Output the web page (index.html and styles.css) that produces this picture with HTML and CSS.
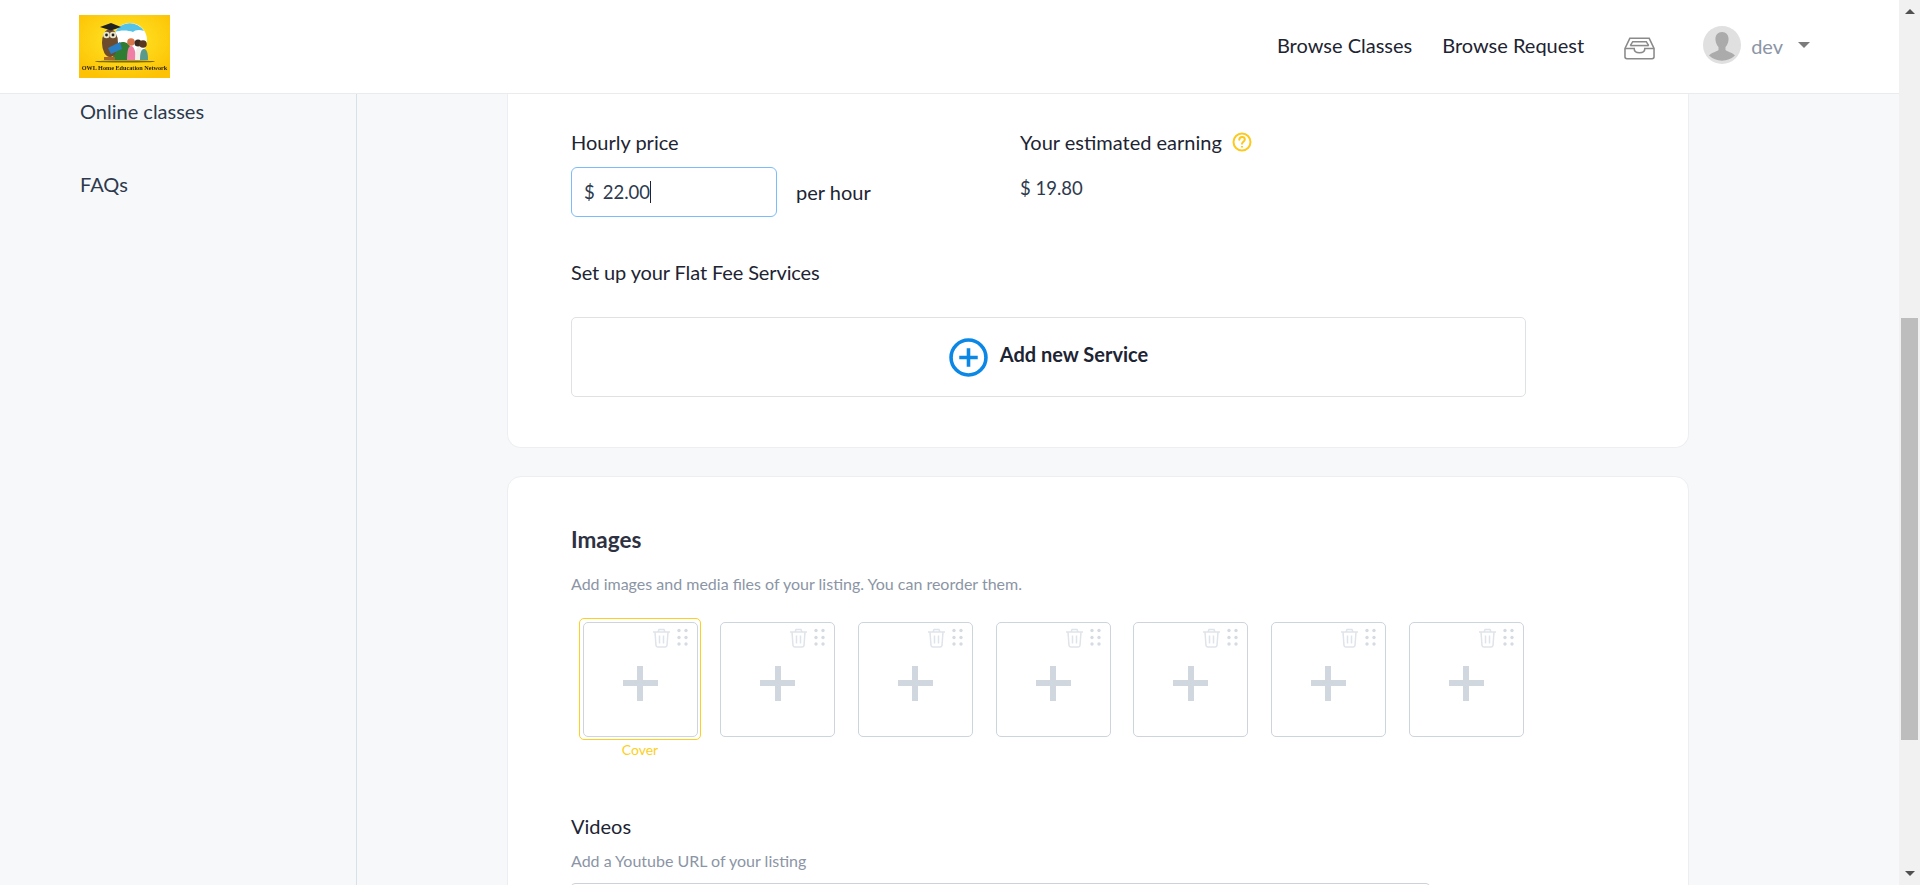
FILE: index.html
```html
<!DOCTYPE html>
<html lang="en">
<head>
  <meta charset="UTF-8" />
  <title>OWL Home Education Network</title>
  <link rel="stylesheet" href="styles.css">
</head>
<body>
  <div class="page">
    <header class="topbar">
      <svg class="logo" viewBox="0 0 91 63" width="91" height="63">
        <defs>
          <radialGradient id="logoBg" cx="50%" cy="40%" r="65%">
            <stop offset="0" stop-color="#ffe92a"/>
            <stop offset="1" stop-color="#fdc204"/>
          </radialGradient>
        </defs>
        <rect width="91" height="63" fill="url(#logoBg)"/>
        <circle cx="51" cy="25" r="17" fill="#fff"/>
        <path d="M36 17a17 17 0 0 1 29-1c-5-2-9-1-11 1-5-2-13-2-18 0z" fill="#56c2e6"/>
        <path d="M34 45c0-14 6-19 11-18 7 1 9 9 9 18z" fill="#2f7d32"/>
        <ellipse cx="31" cy="28" rx="8" ry="14" fill="#6d4c2e"/>
        <path d="M21 12l11-4 10 4-10 3.500z" fill="#222"/>
        <circle cx="27.500" cy="20" r="3.300" fill="#e8e4c8"/>
        <circle cx="34" cy="20" r="3.300" fill="#e8e4c8"/>
        <circle cx="27.500" cy="20" r="1.400" fill="#222"/>
        <circle cx="34" cy="20" r="1.400" fill="#222"/>
        <path d="M29 33l12-6 2 7-11 5z" fill="#2a7fc4"/>
        <path d="M25 42h11v3H25z" fill="#a8642a"/>
        <circle cx="52" cy="27" r="3.800" fill="#d9754a"/>
        <path d="M48 45c0-8 1-14 4-14s5 6 5 14z" fill="#ef7fa4"/>
        <circle cx="59" cy="28" r="3.500" fill="#3a2a20"/>
        <path d="M56 45c0-7 1-13 4-13s4 6 4 13z" fill="#f0f0e8"/>
        <circle cx="64" cy="29" r="3.800" fill="#5a3820"/>
        <path d="M61 45c0-7 1-11 4-11s4 4 4 11z" fill="#5b9a8a"/>
        <ellipse cx="46" cy="46.500" rx="30" ry="1" fill="#7a6a10"/>
        <text class="logo-text" x="45.500" y="54.500" text-anchor="middle">OWL Home Education Network</text>
      </svg>
      <nav class="topnav">
        <a class="topnav-link">Browse Classes</a>
        <a class="topnav-link">Browse Request</a>
        <svg class="inbox" viewBox="0 0 32 24" width="31" height="24" fill="none" stroke="#8a8a8a" stroke-width="1.600">
          <path d="M1 12.500 6 2h20l5 10.500V21a2 2 0 0 1-2 2H3a2 2 0 0 1-2-2z"/>
          <path d="M1 12.500h9.500c0 3 2.500 4.500 5.500 4.500s5.500-1.500 5.500-4.500H31"/>
          <path d="M6.500 9.500 9 5.500h14l2.500 4"/>
          <path d="M6.500 9.500h19"/>
        </svg>
        <div class="usermenu">
          <svg class="avatar" viewBox="0 0 38 38" width="38" height="38">
            <circle cx="19" cy="19" r="19" fill="#e0e0e0"/>
            <path d="M19 6c4.500 0 7 3.500 6.500 8-.3 3-1.500 5.500-3 7v3c1 1.500 7 2.500 9.500 5.500a19 19 0 0 1-26 0C8.500 26.500 14.500 25.500 15.500 24v-3c-1.500-1.500-2.700-4-3-7C12 9.500 14.500 6 19 6z" fill="#ababab"/>
          </svg>
          <span class="username">dev</span>
          <span class="caret"></span>
        </div>
      </nav>
    </header>

    <div class="layout">
      <aside class="sidebar">
        <a class="side-link">Online classes</a>
        <a class="side-link">FAQs</a>
      </aside>

      <main class="content">
        <section class="card card-cut">
          <div class="price-row">
            <div class="price-col">
              <label class="field-label">Hourly price</label>
              <div class="price-input-row">
                <div class="price-input"><span class="dollar">$</span><span>22.00</span><span class="cursor"></span></div>
                <span class="per-hour">per hour</span>
              </div>
            </div>
            <div class="earning-col">
              <div class="field-label earning-label">Your estimated earning
                <svg class="help" viewBox="0 0 20 20" width="20" height="20" fill="none" stroke="#fdc91b" stroke-width="2">
                  <circle cx="10" cy="10" r="8.500"/>
                  <path d="M7.300 7.800c0-1.700 1.200-2.800 2.800-2.800s2.700 1 2.700 2.400c0 2.200-2.800 2.300-2.800 4.400" stroke-linecap="round"/>
                  <path d="M10 14v1.600"/>
                </svg>
              </div>
              <div class="earning-value">$ 19.80</div>
            </div>
          </div>
          <div class="flat-fee-title">Set up your Flat Fee Services</div>
          <div class="add-service">
            <svg viewBox="0 0 38 38" width="39" height="39" fill="none" stroke="#0b87e6" stroke-width="3.500">
              <circle cx="19" cy="19" r="17"/>
              <path d="M19 10v18M10 19h18"/>
            </svg>
            <span class="add-service-text">Add new Service</span>
          </div>
        </section>

        <section class="card card-media">
          <h2 class="card-title">Images</h2>
          <p class="hint">Add images and media files of your listing. You can reorder them.</p>
          <div class="tiles">
            <div class="tile-wrap tile-cover">
              <div class="tile-frame"><div class="tile">
                <svg class="tile-tools" viewBox="0 0 38 20" width="38" height="20" fill="none" stroke="#dfe4ea" stroke-width="1.500">
                  <g id="toolset">
                    <path d="M1 4h17M6 4l1-2.500h5l1 2.500M3 4l1 13.500a2 2 0 0 0 2 1.500h7a2 2 0 0 0 2-1.500L16 4M7.500 7.500v8M11.500 7.500v8"/>
                    <g fill="#d5dbe2" stroke="none"><circle cx="27" cy="2.500" r="1.700"/><circle cx="34" cy="2.500" r="1.700"/><circle cx="27" cy="9.500" r="1.700"/><circle cx="34" cy="9.500" r="1.700"/><circle cx="27" cy="16" r="1.700"/><circle cx="34" cy="16" r="1.700"/></g>
                  </g>
                </svg>
                <span class="plus"></span>
              </div></div>
              <div class="cover-label">Cover</div>
            </div>
            <div class="tile-wrap"><div class="tile-frame"><div class="tile">
              <svg class="tile-tools" viewBox="0 0 38 20" width="38" height="20" fill="none" stroke="#dfe4ea" stroke-width="1.500"><use href="#toolset"/></svg>
              <span class="plus"></span>
            </div></div></div>
            <div class="tile-wrap"><div class="tile-frame"><div class="tile">
              <svg class="tile-tools" viewBox="0 0 38 20" width="38" height="20" fill="none" stroke="#dfe4ea" stroke-width="1.500"><use href="#toolset"/></svg>
              <span class="plus"></span>
            </div></div></div>
            <div class="tile-wrap"><div class="tile-frame"><div class="tile">
              <svg class="tile-tools" viewBox="0 0 38 20" width="38" height="20" fill="none" stroke="#dfe4ea" stroke-width="1.500"><use href="#toolset"/></svg>
              <span class="plus"></span>
            </div></div></div>
            <div class="tile-wrap"><div class="tile-frame"><div class="tile">
              <svg class="tile-tools" viewBox="0 0 38 20" width="38" height="20" fill="none" stroke="#dfe4ea" stroke-width="1.500"><use href="#toolset"/></svg>
              <span class="plus"></span>
            </div></div></div>
            <div class="tile-wrap"><div class="tile-frame"><div class="tile">
              <svg class="tile-tools" viewBox="0 0 38 20" width="38" height="20" fill="none" stroke="#dfe4ea" stroke-width="1.500"><use href="#toolset"/></svg>
              <span class="plus"></span>
            </div></div></div>
            <div class="tile-wrap"><div class="tile-frame"><div class="tile">
              <svg class="tile-tools" viewBox="0 0 38 20" width="38" height="20" fill="none" stroke="#dfe4ea" stroke-width="1.500"><use href="#toolset"/></svg>
              <span class="plus"></span>
            </div></div></div>
          </div>
          <div class="videos-title">Videos</div>
          <p class="hint hint-videos">Add a Youtube URL of your listing</p>
          <div class="video-input"></div>
        </section>
      </main>
    </div>
  </div>

  <div class="scrollbar">
    <span class="arrow-up"></span>
    <div class="scroll-track"><div class="scroll-thumb"></div></div>
    <span class="arrow-down"></span>
  </div>
</body>
</html>
```

FILE: styles.css
```css
html, body {
  margin: 0;
  height: 885px;
  overflow: hidden;
}
body {
  display: flex;
  font-family: Lato, "Open Sans", sans-serif;
  color: #1d2433;
  background-color: #f7f8fa;
}
.page {
  flex: 1;
  min-width: 0;
  display: flex;
  flex-direction: column;
}

/* header */
.topbar {
  height: 93px;
  flex: none;
  display: flex;
  align-items: center;
  justify-content: space-between;
  padding: 0 89px 0 79px;
  background: white;
  border-bottom: 1px solid #e9ebee;
}
.logo {
  margin-top: -1px;
  filter: blur(0.4px);
}
.logo-text {
  font-family: "Liberation Serif", serif;
  font-size: 6.200px;
  font-weight: bold;
  fill: #2a2410;
}
.topnav {
  display: flex;
  align-items: center;
  padding-bottom: 4px;
}
.topnav-link {
  font-size: 20px;
  color: #1d2433;
  margin-right: 30px;
}
.topnav-link + .topnav-link {
  margin-right: 40px;
}
.inbox {
  margin-right: 48px;
  margin-top: 6px;
}
.usermenu {
  display: flex;
  align-items: center;
}
.username {
  font-size: 20px;
  color: #8b95a5;
  margin: 2px 15px 0 10px;
}
.caret {
  width: 0;
  height: 0;
  border-left: 6px solid transparent;
  border-right: 6px solid transparent;
  border-top: 6px solid #7c7c7c;
  margin-top: 1px;
}

/* sidebar */
.layout {
  flex: 1;
  display: flex;
  min-height: 0;
}
.sidebar {
  width: 357px;
  flex: none;
  display: flex;
  flex-direction: column;
  gap: 51px;
  padding: 6px 0 0 80px;
  box-sizing: border-box;
  border-right: 1px solid #d8e1ea;
}
.side-link {
  font-size: 20px;
  line-height: 22px;
  color: #2d3a4d;
}

/* cards */
.content {
  flex: 1;
  min-width: 0;
  padding: 0 210px 0 150px;
}
.card {
  background: white;
  border: 1px solid #eceef1;
  border-radius: 14px;
  padding: 0 62px 0 63px;
}
.card-cut {
  border-top: none;
  border-radius: 0 0 14px 14px;
  height: 354px;
  box-sizing: border-box;
  padding-top: 36px;
}
.card-media {
  margin-top: 28px;
  padding-top: 50px;
}
.price-row {
  display: flex;
}
.price-col {
  width: 449px;
}
.field-label {
  font-size: 20px;
  line-height: 24px;
}
.price-input-row {
  display: flex;
  align-items: center;
  margin-top: 13px;
}
.price-input {
  width: 206px;
  height: 50px;
  box-sizing: border-box;
  display: flex;
  align-items: center;
  padding-left: 12px;
  border: 1px solid #7cbcfb;
  border-radius: 6px;
  font-size: 18.500px;
  color: #2d3a4d;
}
.dollar {
  margin-right: 8px;
}
.cursor {
  width: 1px;
  height: 22px;
  background: #1d2433;
}
.per-hour {
  font-size: 20px;
  margin-left: 19px;
}
.earning-label {
  display: flex;
  align-items: center;
  gap: 10px;
}
.earning-value {
  font-size: 18.500px;
  color: #2d3a4d;
  margin-top: 23px;
}
.flat-fee-title {
  font-size: 20px;
  line-height: 24px;
  letter-spacing: -0.12px;
  margin-top: 43px;
}
.add-service {
  height: 80px;
  width: 955px;
  box-sizing: border-box;
  display: flex;
  align-items: center;
  justify-content: center;
  gap: 12px;
  margin-top: 33px;
  border: 1px solid #dfe1e4;
  border-radius: 5px;
}
.add-service-text {
  font-size: 20px;
  font-weight: bold;
  margin-top: -7px;
}
.card-title {
  font-size: 22.500px;
  line-height: 26px;
  font-weight: bold;
  color: #2d3142;
  margin: 0;
}
.hint {
  font-size: 16px;
  line-height: 20px;
  color: #8b95a5;
  margin: 21px 0 0;
}

/* image tiles */
.tiles {
  display: flex;
  align-items: flex-start;
  gap: 15.700px;
  margin-top: 24px;
  padding-left: 8px;
}
.tile-wrap {
  width: 122px;
  flex: none;
  display: flex;
  flex-direction: column;
  align-items: center;
}
.tile-frame {
  padding: 2.500px;
  border: 1px solid transparent;
  border-radius: 5px;
}
.tile-cover .tile-frame {
  border-color: #fdcf22;
}
.tile {
  width: 115px;
  height: 115px;
  box-sizing: border-box;
  position: relative;
  border: 1px solid #ccd4dc;
  border-radius: 5px;
}
.tile-tools {
  position: absolute;
  top: 5px;
  right: 7px;
}
.plus {
  position: absolute;
  left: 39px;
  top: 43px;
  width: 35px;
  height: 35px;
  background:
    linear-gradient(#d0d7df, #d0d7df) center / 6px 35px no-repeat,
    linear-gradient(#d0d7df, #d0d7df) center / 35px 6px no-repeat;
}
.cover-label {
  font-size: 14px;
  line-height: 16px;
  color: #fdcf22;
  margin-top: 2px;
}
.videos-title {
  font-size: 20px;
  line-height: 24px;
  margin-top: 56px;
}
.hint-videos {
  margin-top: 13px;
}
.video-input {
  width: 859px;
  height: 60px;
  margin-top: 12px;
  box-sizing: border-box;
  border: 1px solid #cdd2d9;
  border-radius: 4px;
}

/* window scrollbar */
.scrollbar {
  width: 21px;
  flex: none;
  display: flex;
  flex-direction: column;
  align-items: center;
  background: #f1f1f1;
}
.arrow-up, .arrow-down {
  width: 0;
  height: 0;
  flex: none;
  border-left: 5px solid transparent;
  border-right: 5px solid transparent;
}
.arrow-up {
  margin-top: 9px;
  border-bottom: 5px solid #505050;
}
.arrow-down {
  margin-bottom: 9px;
  border-top: 5px solid #505050;
}
.scroll-track {
  flex: 1;
  width: 100%;
  padding-top: 304px;
  box-sizing: border-box;
}
.scroll-thumb {
  width: 17px;
  height: 422px;
  margin: 0 auto;
  background: #bdbdbd;
}
```
